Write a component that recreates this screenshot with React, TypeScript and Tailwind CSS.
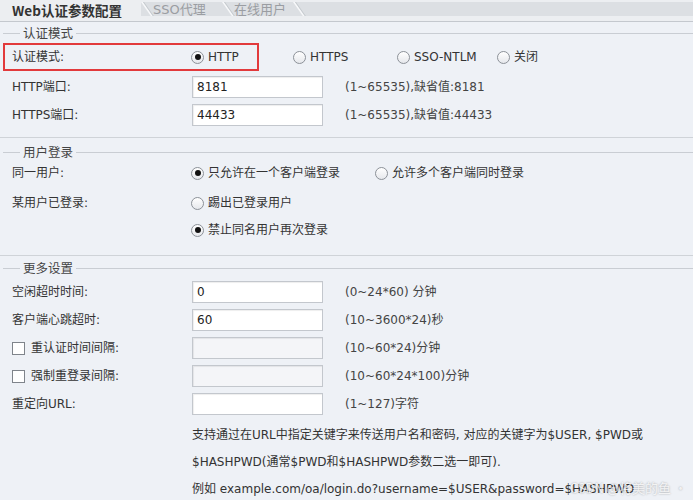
import React from "react";

function Radio({ checked, label }: { checked?: boolean; label: string }) {
  return (
    <span className="flex items-center gap-[4px]">
      <span className="w-[13px] h-[13px] rounded-full border border-[#8c9198] bg-gradient-to-b from-white to-[#e6e8ec] flex items-center justify-center shrink-0">
        {checked && <span className="w-[6px] h-[6px] rounded-full bg-[#111]" />}
      </span>
      <span className="whitespace-nowrap">{label}</span>
    </span>
  );
}

function Legend({ title }: { title: string }) {
  return (
    <div className="flex items-center h-[17px] pl-[3px]">
      <div className="w-[17px] border-t border-[#c9cdd3]" />
      <span className="px-[3px] text-[#444] text-[12.5px] leading-[17px]">{title}</span>
      <div className="flex-1 border-t border-[#c9cdd3]" />
    </div>
  );
}

function Box({ value, disabled }: { value?: string; disabled?: boolean }) {
  return (
    <div
      className={`w-[131px] h-[22px] ml-px border border-[#c3c7cd] px-[4px] leading-[20px] text-[#222] shadow-[inset_1px_1px_1px_rgba(0,0,0,0.07)] ${
        disabled ? "bg-[#f4f5f8]" : "bg-white"
      }`}
    >
      {value}
    </div>
  );
}

function Check({ label }: { label: string }) {
  return (
    <span className="flex items-center gap-[6px]">
      <span className="w-[13px] h-[13px] border border-[#7f848b] bg-white shrink-0" />
      <span>{label}</span>
    </span>
  );
}

function Row({ label, children, hint, h = "h-[28px]" }: any) {
  return (
    <div className={`grid grid-cols-[179px_154px_1fr] items-center pl-[12px] ${h}`}>
      <div className="whitespace-nowrap">{label}</div>
      <div>{children}</div>
      <div className="whitespace-nowrap text-[#444]">{hint}</div>
    </div>
  );
}

function Tab({ label, w }: { label: string; w: string }) {
  return (
    <div className={`relative ${w} pl-[12px] text-[#9a9da2] text-[13px] leading-[15px]`}>
      <div className="absolute left-0 top-0 h-full w-[2px] bg-[#f7f8fa] origin-top skew-x-[35deg]" />
      <div className="absolute left-[2px] top-0 h-full w-px bg-[#c4c8cd] origin-top skew-x-[35deg]" />
      {label}
    </div>
  );
}

export default function App() {
  return (
    <div className="w-[696px] h-[504px] bg-white font-['DejaVu_Sans','Noto_Sans_CJK_SC',sans-serif] text-[12px] text-[#333]">
      <div className="relative w-[693px] h-[500px] bg-[#eef1f6] overflow-hidden">
        {/* tabs */}
        <div className="h-[22px] bg-[#eceef1] border-b border-[#c4c8ce] pt-[2px]">
          <div className="h-[14px] bg-[#dcdfe3] flex items-stretch">
            <div className="w-[141px] bg-[#eceef1] pl-[12px] font-bold text-[13.5px] text-[#333] leading-[16px] h-[19px] font-['Noto_Sans_CJK_SC',sans-serif]">
              Web认证参数配置
            </div>
            <Tab label="SSO代理" w="w-[81px]" />
            <Tab label="在线用户" w="w-[71px]" />
            <Tab label="" w="w-[20px]" />
          </div>
        </div>

        {/* 认证模式 */}
        <div className="mt-[3px]">
          <Legend title="认证模式" />
        </div>
        <div className="mt-px flex items-center h-[28px]">
          <div className="ml-[3px] w-[256px] h-[28px] border-2 border-[#e23a3c] flex items-center pl-[7px]">
            <div className="w-[179px] whitespace-nowrap">认证模式:</div>
            <Radio checked label="HTTP" />
          </div>
          <div className="ml-[34px] w-[104px]">
            <Radio label="HTTPS" />
          </div>
          <div className="w-[100px]">
            <Radio label="SSO-NTLM" />
          </div>
          <Radio label="关闭" />
        </div>
        <div className="mt-[2px]">
          <Row label="HTTP端口:" hint="(1~65535),缺省值:8181">
            <Box value="8181" />
          </Row>
          <Row label="HTTPS端口:" hint="(1~65535),缺省值:44433">
            <Box value="44433" />
          </Row>
        </div>
        <div className="mt-[8px] border-t border-[#cfd3d8]" />

        {/* 用户登录 */}
        <div className="mt-[6px]">
          <Legend title="用户登录" />
        </div>
        <div className="grid grid-cols-[179px_184px_1fr] items-center pl-[12px] h-[24px]">
          <div>同一用户:</div>
          <Radio checked label="只允许在一个客户端登录" />
          <Radio label="允许多个客户端同时登录" />
        </div>
        <div className="mt-[4px] grid grid-cols-[179px_1fr] items-center pl-[12px] h-[28px]">
          <div>某用户已登录:</div>
          <Radio label="踢出已登录用户" />
        </div>
        <div className="grid grid-cols-[179px_1fr] items-center pl-[12px] h-[26px]">
          <div />
          <Radio checked label="禁止同名用户再次登录" />
        </div>
        <div className="mt-[12px] border-t border-[#cfd3d8]" />

        {/* 更多设置 */}
        <div className="mt-[4px]">
          <Legend title="更多设置" />
        </div>
        <div className="mt-px">
          <Row label="空闲超时时间:" hint="(0~24*60) 分钟">
            <Box value="0" />
          </Row>
          <Row label="客户端心跳超时:" hint="(10~3600*24)秒">
            <Box value="60" />
          </Row>
          <Row label={<Check label="重认证时间间隔:" />} hint="(10~60*24)分钟">
            <Box disabled />
          </Row>
          <Row label={<Check label="强制重登录间隔:" />} hint="(10~60*24*100)分钟">
            <Box disabled />
          </Row>
          <Row label="重定向URL:" hint="(1~127)字符">
            <Box />
          </Row>
        </div>
        <div className="mt-[4px] pl-[192px] leading-[27px] text-[#333] whitespace-nowrap">
          <div>支持通过在URL中指定关键字来传送用户名和密码, 对应的关键字为$USER, $PWD或</div>
          <div>$HASHPWD(通常$PWD和$HASHPWD参数二选一即可).</div>
          <div>例如 example.com/oa/login.do?username=$USER&amp;password=$HASHPWD</div>
        </div>

        <div className="absolute right-[6px] bottom-[3px] text-[13px] text-white/80 [text-shadow:0_0_2px_rgba(0,0,0,0.35)] font-['Noto_Sans_CJK_SC',sans-serif]">
          CSDN @将美的鱼 ·
        </div>
      </div>
    </div>
  );
}
